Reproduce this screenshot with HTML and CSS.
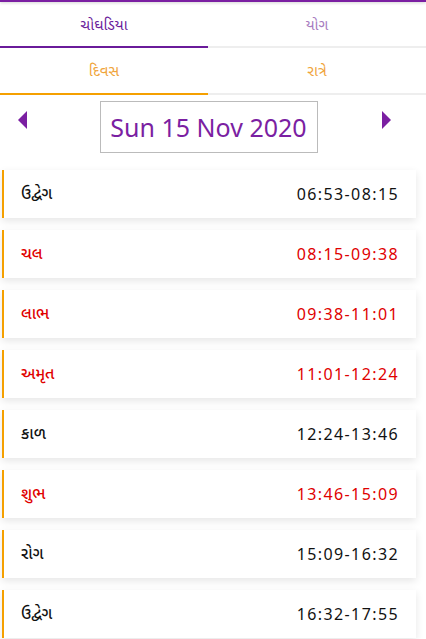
FILE: index.html
```html
<!DOCTYPE html>
<html lang="gu">

<head>
    <meta charset="UTF-8">
    <meta name="viewport" content="width=device-width, initial-scale=1.0">
    <title>ચોઘડિયા</title>
    <link rel="stylesheet" href="styles.css">
</head>

<body>
    <div class="topbar"></div>

    <div class="tabs main-tabs">
        <div class="tab active">ચોઘડિયા</div>
        <div class="tab">યોગ</div>
    </div>

    <div class="tabs sub-tabs">
        <div class="tab active">દિવસ</div>
        <div class="tab">રાત્રે</div>
    </div>

    <div class="date-row">
        <svg class="arrow" width="9" height="18" viewBox="0 0 9 18"><polygon points="9,0 9,18 0,9" /></svg>
        <div class="date-box">Sun 15 Nov 2020</div>
        <svg class="arrow" width="9" height="18" viewBox="0 0 9 18"><polygon points="0,0 0,18 9,9" /></svg>
    </div>

    <div class="list">
        <div class="card"><span>ઉદ્વેગ</span><span class="time">06:53-08:15</span></div>
        <div class="card good"><span>ચલ</span><span class="time">08:15-09:38</span></div>
        <div class="card good"><span>લાભ</span><span class="time">09:38-11:01</span></div>
        <div class="card good"><span>અમૃત</span><span class="time">11:01-12:24</span></div>
        <div class="card"><span>કાળ</span><span class="time">12:24-13:46</span></div>
        <div class="card good"><span>શુભ</span><span class="time">13:46-15:09</span></div>
        <div class="card"><span>રોગ</span><span class="time">15:09-16:32</span></div>
        <div class="card"><span>ઉદ્વેગ</span><span class="time">16:32-17:55</span></div>
    </div>
</body>

</html>
```

FILE: styles.css
```css
body {
    margin: 0;
    background-color: #ffffff;
    font-family: "Noto Sans", "Noto Sans Gujarati", "Lohit Gujarati", sans-serif;
    overflow: hidden;
}

.topbar {
    height: 2px;
    background-color: #7b1fa2;
    box-shadow: 0 1px 3px rgba(0, 0, 0, 0.2);
}

.tabs {
    display: flex;
}

.tab {
    flex: 1;
    text-align: center;
    font-size: 15px;
    border-bottom: 2px solid #eeeeee;
}

.tab.active {
    flex: 0 0 208px;
}

.main-tabs .tab {
    height: 44px;
    line-height: 44px;
    color: #a77bc0;
}

.main-tabs .tab.active {
    color: #6a1b9a;
    border-bottom-color: #6a1b9a;
}

.sub-tabs .tab {
    height: 45px;
    line-height: 45px;
    color: #f0a43a;
}

.sub-tabs .tab.active {
    border-bottom-color: #f5a000;
}

.date-row {
    display: flex;
    justify-content: space-between;
    align-items: flex-start;
    padding: 6px 35px 0 18px;
    height: 68px;
    box-sizing: border-box;
}

.arrow {
    fill: #7b1fa2;
    margin-top: 10px;
}

.date-box {
    width: 216px;
    height: 50px;
    line-height: 50px;
    border: 1px solid #bbbbbb;
    text-align: center;
    font-size: 25px;
    color: #7b1fa2;
    margin-left: 8px;
}

.list {
    padding: 7px 10px 0 2px;
}

.card {
    display: flex;
    justify-content: space-between;
    align-items: center;
    height: 48px;
    margin-bottom: 12px;
    padding: 0 18px 0 17px;
    background-color: #ffffff;
    border-left: 2px solid #f5a000;
    box-shadow: 0 3px 8px rgba(0, 0, 0, 0.1);
    font-size: 16px;
    font-weight: 500;
    color: #111111;
}

.card.good {
    color: #e00000;
}

.time {
    font-size: 16px;
    font-weight: 400;
    letter-spacing: 1.4px;
    margin-right: -1px;
}
```
